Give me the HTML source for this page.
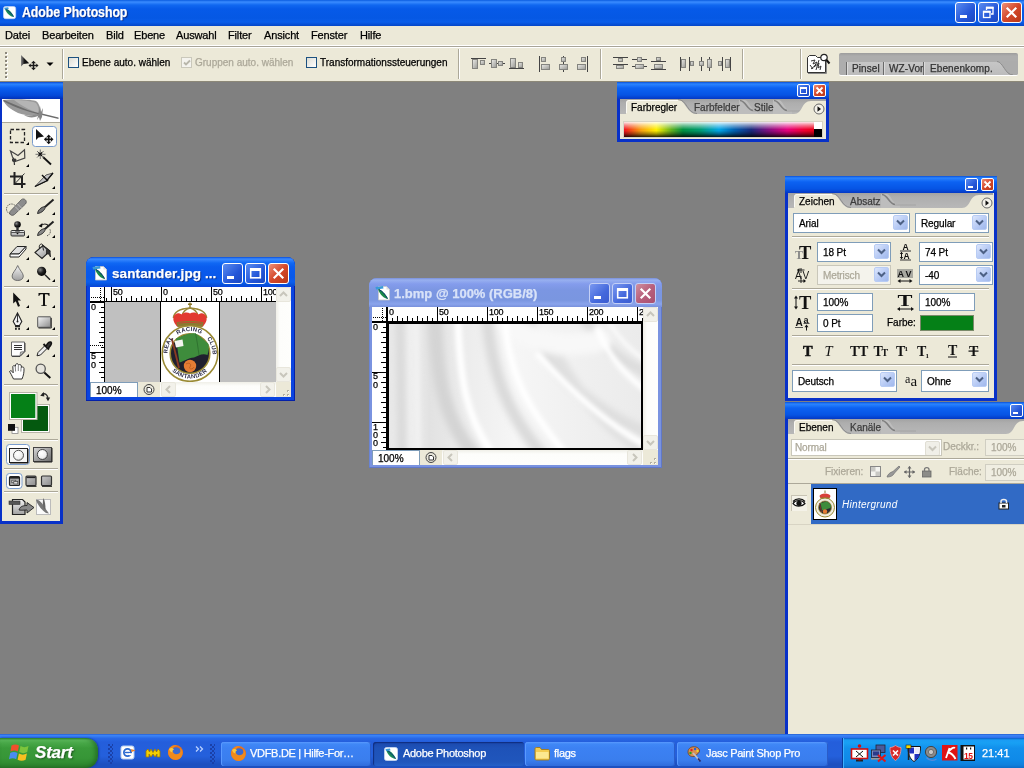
<!DOCTYPE html>
<html><head><meta charset="utf-8"><title>Adobe Photoshop</title>
<style>
*{box-sizing:border-box;margin:0;padding:0}
html,body{width:1024px;height:768px;overflow:hidden;background:#808080;font-family:"Liberation Sans",sans-serif;font-size:11px;color:#000;letter-spacing:-0.45px;-webkit-text-stroke:0.250px currentColor}
.abs{position:absolute}
#titlebar{position:absolute;left:0;top:0;width:1024px;height:26px;background:linear-gradient(#0a5ce0 0,#3a8cff 2px,#1068f0 5px,#065ae8 9px,#0558e4 18px,#0a5eea 22px,#0446c8 26px)}
#titlebar .t{position:absolute;left:22px;top:4px;color:#fff;font-weight:bold;font-size:14px;transform-origin:0 0;transform:scaleX(0.885);text-shadow:1px 1px 1px #0a2a80;letter-spacing:-0.1px;white-space:nowrap}
.wb svg{position:absolute;left:0;top:0}
.wb{position:absolute;width:21px;height:21px;border:1px solid #fff;border-radius:3px;background:linear-gradient(135deg,#5a8cf0,#2456d8 60%,#1c48c0)}
.wb.close{background:linear-gradient(135deg,#ee9078,#d4482a 50%,#b83818)}
#menubar{position:absolute;left:0;top:26px;width:1024px;height:20px;background:#ece9d8;border-bottom:1px solid #fff}
#menubar span{position:absolute;top:3px;font-size:11px;letter-spacing:-0.15px}
#optbar{position:absolute;left:0;top:46px;width:1024px;height:36px;background:#ece9d8;border-top:1px solid #a8a498;border-bottom:1px solid #8c8878;box-shadow:inset 0 1px 0 #fff}
#taskbar{position:absolute;left:0;top:734px;width:1024px;height:34px;background:linear-gradient(#3a80f0 0,#2a6cea 3px,#245edb 8px,#2460dc 22px,#1d50c0 30px)}

#optbar .sep{position:absolute;top:2px;width:2px;height:30px;border-left:1px solid #aca899;border-right:1px solid #fff}
.cb{position:absolute;width:11px;height:11px;border:1px solid #1c5180;background:linear-gradient(135deg,#dcdcd4,#fff)}
.cb.dis{border-color:#cac8bb;background:#f4f3ee}
.ol{position:absolute;top:10px;font-size:10px;white-space:nowrap;letter-spacing:0}
.well{position:absolute;left:839px;top:6px;width:179px;height:22px;background:linear-gradient(#9c9c9c,#adadad 3px,#adadad);border-radius:2px;overflow:hidden;box-shadow:0 1px 0 #fff}
.well span{position:absolute;top:10px;font-size:10px;color:#333;white-space:nowrap;letter-spacing:0.1px}
.well i{position:absolute;top:9px;width:2px;height:13px;border-left:1px solid #6a6a6a;border-right:1px solid #dadada}

.win{position:absolute;border-radius:8px 8px 0 0;background:#0a44e0;overflow:hidden;box-shadow:inset -1px -1px 0 #0420a8,inset 1px 0 0 #0a30c0}
.win .tb{position:absolute;left:0;top:0;right:0;height:29px;background:linear-gradient(#0a4ed8 0,#3a8aff 2px,#1068f4 6px,#0a5cee 10px,#0858ea 20px,#0a5eee 25px,#064cd4 29px)}
.win .tt{position:absolute;top:9px;color:#fff;font-weight:bold;font-size:13.500px;text-shadow:1px 1px 1px #0a2a80;white-space:nowrap}
.win.in{background:#7a93e0;box-shadow:inset -1px -1px 0 #6078c8,inset 1px 0 0 #6a84d4}
.win.in .tb{background:linear-gradient(#7a90d8 0,#98b0f0 2px,#849cec 6px,#7b96e2 12px,#7a96e0 22px,#8aa4ec 26px,#7890dc 29px)}
.win.in .tt{color:#d8e2f8;text-shadow:none}
.win.in .wb{background:linear-gradient(135deg,#7a98f0,#4468dc 60%,#3c5cd0);border-color:#c4d0f6}
.win.in .wb.close{background:linear-gradient(135deg,#d090a0,#b8607c 50%,#a85070)}
.cont{position:absolute;background:#fff;overflow:hidden}
.rl{position:absolute;font-size:9px;letter-spacing:-0.3px;line-height:8px;color:#000}
.sbv{position:absolute;width:15px;background:linear-gradient(90deg,#f0efe8,#fdfdfb 4px,#fefefc)}
.sbb{position:absolute;height:15px;background:linear-gradient(#f0efe8,#fdfdfb 4px,#fefefc)}
.sbtn{position:absolute;width:15px;height:15px;border:1px solid #e8e6dc;border-radius:2px;background:#f2f1ea}
.zb{position:absolute;background:#fff;font-size:10px;letter-spacing:0;padding:2px 0 0 5px;border:1px solid #7f9db9;border-bottom:0;color:#000}

.pal{position:absolute;background:#0831c8;overflow:hidden}
.pal .ptb{position:absolute;left:0;top:0;right:0;height:16px;background:linear-gradient(#0a50d8 0,#2a84ff 2px,#0c62f2 6px,#0654e4 13px,#0438c4 100%)}
.pb{position:absolute;width:13px;height:13px;border:1px solid #fff;border-radius:2px;background:linear-gradient(135deg,#5a8cf0,#2456d8 60%,#1c48c0)}
.pb.close{background:linear-gradient(135deg,#ee9078,#d4482a 50%,#b83818)}
.pb svg{position:absolute;left:0;top:0}
.pc{position:absolute;background:#ece9d8;overflow:hidden}
.tabs{position:absolute;left:0;top:0;right:0;height:16px;background:linear-gradient(#a2a2a2,#aeaeae 4px,#b8b8b8)}
.tab{position:absolute;top:0;height:16px;font-size:10px;padding-top:4px;white-space:nowrap;letter-spacing:0}
.combo{position:absolute;height:19px;background:#fff;border:1px solid #7f9db9;font-size:10px;letter-spacing:-0.1px;padding:4px 0 0 5px;white-space:nowrap;overflow:hidden}
.combo b{position:absolute;right:1px;top:1px;width:15px;height:15px;border-radius:2px;background:linear-gradient(135deg,#dce6fc,#b4c8f4 60%,#a0b8ec);border:1px solid #b8ccf4}
.combo b svg{position:absolute;left:2px;top:3px}
.combo.dis{border-color:#c9c7ba;color:#aca899;background:#f4f3ec}
.combo.dis2{background:#fff}
.inp{position:absolute;height:18px;background:#fff;border:1px solid #7f9db9;font-size:10px;letter-spacing:-0.1px;padding:3px 0 0 5px;white-space:nowrap}
.psep{position:absolute;height:2px;border-top:1px solid #aca899;border-bottom:1px solid #fff}

.grip{position:absolute;top:10px;width:5px;height:20px;background:radial-gradient(circle at 1px 1px,#1a40a8 0.900px,transparent 1.200px) 0 0/4px 4px,radial-gradient(circle at 1px 1px,#1a40a8 0.900px,transparent 1.200px) 2px 2px/4px 4px}
.tbtn{position:absolute;top:8px;height:24px;border-radius:3px;background:linear-gradient(#5a9aff 0,#4088f6 2px,#3c81f3 6px,#3a7eee 18px,#2f6cdc 24px);box-shadow:inset 1px 0 0 #5a9aff,inset -1px 0 0 #2a5cc8}
.tbtn.act{background:linear-gradient(#143c9a 0,#1c4cb0 2px,#1e52b8 6px,#2056bc 20px,#2460c8 24px);box-shadow:inset 1px 1px 1px #102e80}
.tbtn span{position:absolute;top:5px;color:#fff;font-size:11px;white-space:nowrap;letter-spacing:-0.3px}
.combo.dis2 b{background:#f0efe8;border-color:#e0ded4}
#root{position:absolute;left:0;top:0;width:1024px;height:768px;will-change:transform;overflow:hidden}
</style></head><body><div id="root">
<div id="titlebar"><svg class="abs" style="left:3px;top:6px" width="14" height="14" viewBox="0 0 16 16"><rect x="0.500" y="0.500" width="14" height="14" rx="2.500" fill="#fff" stroke="#c8d8f0" stroke-width="0.800"/><path d="M2 2.500 C6 3 10.500 7 12.500 12.500 C8 12 3.500 8 2 2.500 Z" fill="#1a8a58"/><path d="M2.500 3 C6 5 9.500 8 12 12" stroke="#0a3a80" stroke-width="1" fill="none"/><path d="M1.500 2 L6 1.500 L6.500 3.500 L2 4 Z" fill="#3a9ad8"/></svg><div class="t">Adobe Photoshop</div>
<div class="wb" style="left:955px;top:2px"><svg width="19" height="19"><rect x="4" y="12" width="7" height="3" fill="#fff"/></svg></div><div class="wb" style="left:978px;top:2px"><svg width="19" height="19"><path d="M7.500 7 L7.500 4.500 L14 4.500 L14 11 L12 11" fill="none" stroke="#fff" stroke-width="1.300"/><rect x="7" y="3.800" width="7.500" height="2" fill="#fff"/><rect x="4.500" y="8.500" width="6.500" height="6" fill="none" stroke="#fff" stroke-width="1.300"/><rect x="4" y="7.800" width="7.500" height="2" fill="#fff"/></svg></div><div class="wb close" style="left:1001px;top:2px"><svg width="19" height="19"><path d="M5.500 5.500 L13.500 13.500 M13.500 5.500 L5.500 13.500" stroke="#fff" stroke-width="2.200" stroke-linecap="square"/></svg></div>
</div>
<div id="menubar">
<span style="left:5px">Datei</span><span style="left:42px">Bearbeiten</span><span style="left:106px">Bild</span><span style="left:134px">Ebene</span><span style="left:176px">Auswahl</span><span style="left:228px">Filter</span><span style="left:264px">Ansicht</span><span style="left:311px">Fenster</span><span style="left:360px">Hilfe</span>
</div>
<div id="optbar">
<svg class="abs" style="left:5px;top:5px" width="4" height="28"><rect x="1" y="1" width="2" height="2" fill="#fff"/><rect x="0" y="0" width="2" height="2" fill="#8c887c"/><rect x="1" y="5" width="2" height="2" fill="#fff"/><rect x="0" y="4" width="2" height="2" fill="#8c887c"/><rect x="1" y="9" width="2" height="2" fill="#fff"/><rect x="0" y="8" width="2" height="2" fill="#8c887c"/><rect x="1" y="13" width="2" height="2" fill="#fff"/><rect x="0" y="12" width="2" height="2" fill="#8c887c"/><rect x="1" y="17" width="2" height="2" fill="#fff"/><rect x="0" y="16" width="2" height="2" fill="#8c887c"/><rect x="1" y="21" width="2" height="2" fill="#fff"/><rect x="0" y="20" width="2" height="2" fill="#8c887c"/><rect x="1" y="25" width="2" height="2" fill="#fff"/><rect x="0" y="24" width="2" height="2" fill="#8c887c"/></svg>
<svg class="abs" style="left:20px;top:7px" width="20" height="18" viewBox="0 0 20 18"><defs><linearGradient id="mvg" x1="0" y1="0" x2="1" y2="0"><stop offset="0" stop-color="#888"/><stop offset="0.45" stop-color="#111"/></linearGradient></defs><path d="M1 1 L1 12.500 L3.500 10 L9.200 9.300 Z" fill="url(#mvg)"/><path d="M13.500 6.800 L16 9.300 L14.200 9.300 L14.200 10.800 L16.300 10.800 L16.300 9.500 L18.500 11.500 L16.300 13.500 L16.300 12.200 L14.200 12.200 L14.200 13.700 L16 13.700 L13.500 16.200 L11 13.700 L12.800 13.700 L12.800 12.200 L10.700 12.200 L10.700 13.500 L8.500 11.500 L10.700 9.500 L10.700 10.800 L12.800 10.800 L12.800 9.300 L11 9.300 Z" fill="#1a1a1a"/></svg>
<svg class="abs" style="left:46px;top:15px" width="8" height="5"><path d="M0.5 0.500 L7.5 0.500 L4 4 Z" fill="#000"/></svg>
<div class="sep" style="left:62px"></div>
<div class="cb" style="left:68px;top:10px"></div><div class="ol" style="left:82px">Ebene auto. wählen</div>
<div class="cb dis" style="left:181px;top:10px"><svg width="10" height="10" style="position:absolute;left:0;top:0"><path d="M2 4.500 L4 6.500 L8 2.500" stroke="#b8b6aa" stroke-width="1.800" fill="none"/></svg></div><div class="ol" style="left:195px;color:#aca899">Gruppen auto. wählen</div>
<div class="cb" style="left:306px;top:10px"></div><div class="ol" style="left:320px">Transformationssteuerungen</div>
<div class="sep" style="left:458px"></div>
<svg class="abs" style="left:466px;top:7px" width="280" height="20"><defs><linearGradient id="ag" x1="0" y1="0" x2="1" y2="1"><stop offset="0" stop-color="#ecece8"/><stop offset="1" stop-color="#989894"/></linearGradient></defs><rect x="5" y="4" width="15" height="1" fill="#444"/><rect x="6.5" y="5.5" width="5.0" height="9.0" fill="url(#ag)" stroke="#84847f" stroke-width="1"/><rect x="14.5" y="6.5" width="4.0" height="4.0" fill="url(#ag)" stroke="#84847f" stroke-width="1"/><rect x="23" y="9" width="16" height="1" fill="#444"/><rect x="25.5" y="5.5" width="5.0" height="8.0" fill="url(#ag)" stroke="#84847f" stroke-width="1"/><rect x="32.5" y="7.5" width="4.0" height="4.0" fill="url(#ag)" stroke="#84847f" stroke-width="1"/><rect x="43" y="14" width="15" height="1" fill="#444"/><rect x="44.5" y="4.5" width="5.0" height="9.0" fill="url(#ag)" stroke="#84847f" stroke-width="1"/><rect x="52.5" y="8.5" width="4.0" height="5.0" fill="url(#ag)" stroke="#84847f" stroke-width="1"/><rect x="73" y="2" width="1" height="16" fill="#444"/><rect x="75.5" y="3.5" width="4.0" height="4.0" fill="url(#ag)" stroke="#84847f" stroke-width="1"/><rect x="75.5" y="10.5" width="8.0" height="5.0" fill="url(#ag)" stroke="#84847f" stroke-width="1"/><rect x="97" y="2" width="1" height="16" fill="#444"/><rect x="95.5" y="3.5" width="4.0" height="4.0" fill="url(#ag)" stroke="#84847f" stroke-width="1"/><rect x="93.5" y="10.5" width="8.0" height="5.0" fill="url(#ag)" stroke="#84847f" stroke-width="1"/><rect x="121" y="2" width="1" height="16" fill="#444"/><rect x="115.5" y="3.5" width="4.0" height="4.0" fill="url(#ag)" stroke="#84847f" stroke-width="1"/><rect x="111.5" y="10.5" width="8.0" height="5.0" fill="url(#ag)" stroke="#84847f" stroke-width="1"/><rect x="147" y="3" width="15" height="1" fill="#444"/><rect x="152.5" y="4.5" width="4.0" height="3.0" fill="url(#ag)" stroke="#84847f" stroke-width="1"/><rect x="147" y="10" width="15" height="1" fill="#444"/><rect x="150.5" y="11.5" width="7.0" height="3.0" fill="url(#ag)" stroke="#84847f" stroke-width="1"/><rect x="166" y="5" width="15" height="1" fill="#444"/><rect x="171.5" y="3.5" width="4.0" height="4.0" fill="url(#ag)" stroke="#84847f" stroke-width="1"/><rect x="166" y="12" width="15" height="1" fill="#444"/><rect x="169.5" y="10.5" width="8.0" height="4.0" fill="url(#ag)" stroke="#84847f" stroke-width="1"/><rect x="185" y="7" width="15" height="1" fill="#444"/><rect x="190.5" y="3.5" width="4.0" height="3.0" fill="url(#ag)" stroke="#84847f" stroke-width="1"/><rect x="185" y="15" width="15" height="1" fill="#444"/><rect x="188.5" y="10.5" width="8.0" height="4.0" fill="url(#ag)" stroke="#84847f" stroke-width="1"/><rect x="214" y="3" width="1" height="14" fill="#444"/><rect x="215.5" y="5.5" width="4.0" height="8.0" fill="url(#ag)" stroke="#84847f" stroke-width="1"/><rect x="223" y="3" width="1" height="14" fill="#444"/><rect x="224.5" y="7.5" width="3.0" height="4.0" fill="url(#ag)" stroke="#84847f" stroke-width="1"/><rect x="235" y="3" width="1" height="14" fill="#444"/><rect x="233.5" y="7.5" width="4.0" height="4.0" fill="url(#ag)" stroke="#84847f" stroke-width="1"/><rect x="243" y="3" width="1" height="14" fill="#444"/><rect x="241.5" y="5.5" width="4.0" height="8.0" fill="url(#ag)" stroke="#84847f" stroke-width="1"/><rect x="256" y="3" width="1" height="14" fill="#444"/><rect x="252.5" y="7.5" width="3.0" height="4.0" fill="url(#ag)" stroke="#84847f" stroke-width="1"/><rect x="264" y="3" width="1" height="14" fill="#444"/><rect x="259.5" y="5.5" width="4.0" height="8.0" fill="url(#ag)" stroke="#84847f" stroke-width="1"/></svg><div class="sep" style="left:600px"></div><div class="sep" style="left:742px"></div>
<div class="sep" style="left:800px"></div>
<svg class="abs" style="left:806px;top:6px" width="26" height="22" viewBox="0 0 26 22"><path d="M1.500 4.500 L3.500 2.500 L9.500 2.500 L11.500 4.500 L19.500 4.500 L19.500 19.500 L1.500 19.500 Z" fill="#fff" stroke="#333"/><path d="M2 20.500 L20.500 20.500 L20.500 6" stroke="#888" fill="none"/><path d="M5 8 L9 7 L7 11 L11 9 L8 14 L13 10 L12 15 L15 13 L14 17 M4 12 L7 16 M5 16 L10 12 M10 17 L13 7" stroke="#333" stroke-width="1" fill="none"/><circle cx="18" cy="4.500" r="3.200" fill="#fff" stroke="#222" stroke-width="1.200"/><path d="M20.500 7 L23.500 10.500" stroke="#111" stroke-width="2"/></svg>
<div class="well"><div class="abs" style="left:7px;top:9px;width:166px;height:13px;background:linear-gradient(#c6c6c6,#bcbcbc);"></div>
<svg class="abs" style="left:150px;top:8px" width="29" height="14"><path d="M0 0 L8 0 C14 0 16 14 24 14 L29 14 L29 0 Z" fill="#acacac"/><path d="M8 0.500 C14 0.500 16 14 24 14" stroke="#8a8a8a" fill="none"/></svg>
<i style="left:7px"></i><span style="left:13px">Pinsel</span><i style="left:44px"></i><span style="left:50px">WZ-Vor</span><i style="left:84px"></i><span style="left:91px">Ebenenkomp.</span></div>
</div>
<svg class="abs" style="left:0;top:82px" width="64" height="443" viewBox="0 82 64 443">
<defs>
<linearGradient id="tbt" x1="0" y1="0" x2="0" y2="1"><stop offset="0" stop-color="#0a48d0"/><stop offset="0.12" stop-color="#2a84ff"/><stop offset="0.35" stop-color="#0a5ff0"/><stop offset="0.8" stop-color="#0348d8"/><stop offset="1" stop-color="#0230b8"/></linearGradient>
<linearGradient id="gm" x1="0" y1="0" x2="1" y2="1"><stop offset="0" stop-color="#f8f8f8"/><stop offset="1" stop-color="#8a8a8a"/></linearGradient>
<linearGradient id="gm2" x1="0" y1="0" x2="0" y2="1"><stop offset="0" stop-color="#f4f4f4"/><stop offset="1" stop-color="#a0a0a0"/></linearGradient>
<linearGradient id="gq" x1="0" y1="0" x2="1" y2="1"><stop offset="0" stop-color="#d8d8d8"/><stop offset="1" stop-color="#6a6a6a"/></linearGradient><linearGradient id="gq2" x1="0" y1="0" x2="1" y2="1"><stop offset="0" stop-color="#c8c8c8"/><stop offset="1" stop-color="#8c8c8c"/></linearGradient><radialGradient id="ball" cx="0.35" cy="0.35" r="0.7"><stop offset="0" stop-color="#888"/><stop offset="0.5" stop-color="#222"/><stop offset="1" stop-color="#000"/></radialGradient>
<radialGradient id="wball" cx="0.4" cy="0.35" r="0.7"><stop offset="0" stop-color="#fff"/><stop offset="0.7" stop-color="#eee"/><stop offset="1" stop-color="#bbb"/></radialGradient>
</defs>
<rect x="0" y="82" width="63" height="442" fill="#0831c8"/>
<rect x="0" y="82" width="63" height="17" fill="url(#tbt)"/>
<rect x="2" y="99" width="58" height="422" fill="#ece9d8"/>
<rect x="2" y="99" width="58" height="23" fill="#fff"/>
<!-- feather -->
<path d="M3 100 C10 99 28 99 36 101 C40 104 41 110 40 114 C34 116 26 116 18 113 C10 109 5 105 3 100 Z" fill="#9a9a9a"/>
<path d="M14 100 C22 100 32 101 36 103 C39 107 39 111 38 113 C30 110 20 105 14 100 Z" fill="#b4b4b4"/>
<path d="M24 115 C28 118 34 118 38 116 L40 113 C36 115 30 116 24 115 Z" fill="#8c8c8c"/>
<path d="M3 101 C16 108 28 112 42 115 L58.500 119 L58.500 117.500 L42 113.500 C30 112 16 105 4 100 Z" fill="#6c6c6c"/>
<path d="M38 116 L40 106 L41 112 L43 108 L42 117 L40 121 L39 117 L37 120 Z" fill="#858585"/>
<rect x="2" y="122" width="58" height="1" fill="#aca899"/>
<!-- separators -->
<g fill="#aca899"><rect x="4" y="193" width="54" height="1"/><rect x="4" y="286" width="54" height="1"/><rect x="4" y="335" width="54" height="1"/><rect x="4" y="384" width="54" height="1"/><rect x="4" y="439" width="54" height="1"/><rect x="4" y="468" width="54" height="1"/><rect x="4" y="491" width="54" height="1"/></g>
<g fill="#fff"><rect x="4" y="194" width="54" height="1"/><rect x="4" y="287" width="54" height="1"/><rect x="4" y="336" width="54" height="1"/><rect x="4" y="385" width="54" height="1"/><rect x="4" y="440" width="54" height="1"/><rect x="4" y="469" width="54" height="1"/><rect x="4" y="492" width="54" height="1"/></g>
<!-- flyout triangles -->
<g fill="#000">
<path d="M29 142 L29 145 L26 145 Z"/><path d="M29 164 L29 167 L26 167 Z"/><path d="M55 186 L55 189 L52 189 Z"/>
<path d="M29 212 L29 215 L26 215 Z"/><path d="M55 212 L55 215 L52 215 Z"/>
<path d="M29 235 L29 238 L26 238 Z"/><path d="M55 235 L55 238 L52 238 Z"/>
<path d="M29 257 L29 260 L26 260 Z"/><path d="M55 257 L55 260 L52 260 Z"/>
<path d="M29 279 L29 282 L26 282 Z"/><path d="M55 279 L55 282 L52 282 Z"/>
<path d="M29 305 L29 308 L26 308 Z"/><path d="M55 305 L55 308 L52 308 Z"/>
<path d="M29 327 L29 330 L26 330 Z"/><path d="M55 327 L55 330 L52 330 Z"/>
<path d="M29 354 L29 357 L26 357 Z"/><path d="M55 354 L55 357 L52 357 Z"/>
</g>
<!-- marquee -->
<rect x="10.500" y="129.500" width="14" height="13" fill="none" stroke="#222" stroke-width="1.300" stroke-dasharray="3.500 2"/>
<!-- move selected btn -->
<rect x="32.500" y="126.500" width="24" height="20" rx="3" fill="#fff" stroke="#7a9ccc"/>
<path d="M36 129 L36 140 L38.500 137.500 L44 136.500 Z" fill="#111"/>
<path d="M48.700 134.500 L51.200 137.200 L49.500 137.200 L49.500 138.500 L51 138.500 L51 137 L53.500 139.300 L51 141.800 L51 140.200 L49.500 140.200 L49.500 141.700 L51.200 141.700 L48.700 144.200 L46.200 141.700 L47.900 141.700 L47.900 140.200 L46.400 140.200 L46.400 141.800 L43.900 139.300 L46.400 137 L46.400 138.500 L47.900 138.500 L47.900 137.200 L46.200 137.200 Z" fill="#111"/>
<!-- lasso -->
<path d="M10.500 151 L18 155.500 L24.500 149.800 L24.800 158 L15 161.500 L12.500 157 Z" fill="none" stroke="#444" stroke-width="1.200"/>
<path d="M14 158 C11 160 13 162 15 161 C17 160 15 158 14 160 L14.500 165" fill="none" stroke="#333" stroke-width="1.200"/>
<!-- wand -->
<path d="M43 157 L51 164.500" stroke="#111" stroke-width="1.800"/>
<path d="M40.300 149.500 L40.300 159 M35.500 154.300 L45.500 154.300 M37 151 L43.600 157.600 M43.600 151 L37 157.600" stroke="#666" stroke-width="0.900"/>
<path d="M38.500 152.500 L42 156 M42 152.500 L38.500 156" stroke="#111" stroke-width="1.200"/>
<!-- crop -->
<path d="M14.500 172 L14.500 184 L25.500 184 M10 176.500 L22 176.500 L22 188" fill="none" stroke="#222" stroke-width="2"/>
<path d="M15.500 183 L24.500 173.500" stroke="#333" stroke-width="1"/>
<!-- slice knife -->
<path d="M35 186.500 L46 175 L53 173 L46.500 181 Z" fill="url(#gm)" stroke="#333" stroke-width="0.800"/>
<path d="M35 186.500 L46.500 181 L53 173" fill="none" stroke="#111" stroke-width="1.300"/>
<path d="M42 175 L48 181" stroke="#111" stroke-width="1.500"/>
<!-- healing bandaid -->
<circle cx="11.500" cy="209" r="5" fill="none" stroke="#222" stroke-width="1" stroke-dasharray="1 1.300"/>
<path d="M10.500 211 L21.500 199.500 C24 197.500 28 201 25.500 204 L14.500 214.500 C11.500 217 8 213.500 10.500 211 Z" fill="#8c8c8c" stroke="#555" stroke-width="0.800"/>
<path d="M15 206.500 L19.500 211 M17.500 204 L22 208.500" stroke="#ccc" stroke-width="0.800"/>
<!-- brush -->
<path d="M45 207 L53.500 199.500" stroke="#222" stroke-width="2"/>
<path d="M37.500 213.500 C38 210 41 207 45 206.500 C46 209 42 213 37.500 213.500 Z" fill="#777" stroke="#222" stroke-width="0.900"/>
<!-- stamp -->
<circle cx="17.500" cy="224.500" r="3.300" fill="url(#ball)"/>
<rect x="16.300" y="227" width="2.400" height="4" fill="#333"/>
<rect x="11" y="230.500" width="13.500" height="5.500" rx="1" fill="url(#gm2)" stroke="#333" stroke-width="1"/>
<path d="M15 231.500 L20 231.500 L17.500 234.500 Z" fill="#111"/>
<rect x="11" y="232" width="13.500" height="1" fill="#555"/>
<!-- history brush -->
<path d="M45 229 L53.500 221.500" stroke="#222" stroke-width="2"/>
<path d="M37.500 235.500 C38 232 41 229 45 228.500 C46 231 42 235 37.500 235.500 Z" fill="#888" stroke="#222" stroke-width="0.900"/>
<path d="M40 226.500 C43 223 47 223.500 48.500 226" fill="none" stroke="#222" stroke-width="1.200"/>
<path d="M38.500 226 L42.500 223 L42 227.500 Z" fill="#111"/>
<path d="M50 229.500 C51 232 50 235 46.500 236" fill="none" stroke="#222" stroke-width="1" stroke-dasharray="1 1.200"/>
<!-- eraser -->
<path d="M10 254 L17 246.500 L26 246.500 L19 254 Z" fill="#e0e0e0" stroke="#222" stroke-width="1"/>
<path d="M10 254 L19 254 L26 246.500 L26 249 L19 257 L10 257 Z" fill="#fafafa" stroke="#222" stroke-width="1"/>
<!-- bucket -->
<path d="M35 252.500 L43 245.500 L50 251 L42 258.500 Z" fill="url(#gm)" stroke="#222" stroke-width="1.100"/>
<path d="M43 245.500 L50 251 L50.500 257 C49 254 48 253 46.500 254.500 L46.500 250" fill="#333" stroke="#222" stroke-width="0.800"/>
<path d="M39.500 248.500 C38.500 245 41 243 42.500 244.500 L43.500 250.500" fill="none" stroke="#222" stroke-width="1"/>
<!-- blur drop -->
<path d="M17.700 265.500 C19.500 270 23.300 273 23.300 276 C23.300 279 21 280.500 17.700 280.500 C14.400 280.500 12.100 279 12.100 276 C12.100 273 16 270 17.700 265.500 Z" fill="url(#gm2)" stroke="#666" stroke-width="0.900"/>
<!-- dodge -->
<circle cx="41.600" cy="271.300" r="4.600" fill="url(#ball)"/>
<path d="M45 274.700 L50 279.800" stroke="#222" stroke-width="1.400"/>
<!-- path select arrow -->
<path d="M13.200 292.500 L13.200 303.500 L15.800 301.200 L18 306.800 L20 306 L17.800 300.500 L21 300.500 Z" fill="#111"/>
<!-- T -->
<path d="M38.500 293 L49.500 293 L49.500 296 L48.700 296 C48.500 294.500 48 294.200 45 294.200 L45 304.200 C45 305.200 45.500 305.400 47 305.500 L47 306 L41 306 L41 305.500 C42.500 305.400 43 305.200 43 304.200 L43 294.200 C40 294.200 39.500 294.500 39.300 296 L38.500 296 Z" fill="#111"/>
<!-- pen -->
<path d="M17.500 313 L21.800 321.500 L19.500 325.500 L15.500 325.500 L13.200 321.500 Z" fill="#f4f4f4" stroke="#222" stroke-width="1.100"/>
<path d="M17.500 314 L17.500 321" stroke="#222" stroke-width="0.900"/><circle cx="17.500" cy="321.500" r="1" fill="#222"/>
<rect x="15" y="326" width="5" height="1.200" fill="#222"/><rect x="15" y="327.800" width="1.800" height="2" fill="#222"/><rect x="18.200" y="327.800" width="1.800" height="2" fill="#222"/>
<!-- shape -->
<rect x="37.700" y="316.800" width="13" height="10.500" rx="0.500" fill="url(#gm)" stroke="#555" stroke-width="1"/>
<path d="M38.500 328 L51.300 328 L51.300 318" fill="none" stroke="#333" stroke-width="1"/>
<!-- notes -->
<path d="M11.500 342 L24.500 342 L24.500 351.500 L20 356 L11.500 356 Z" fill="#fdfdfd" stroke="#666" stroke-width="1"/>
<path d="M12 356.500 L20 356.500 L25 351.500 L25 343" fill="none" stroke="#444" stroke-width="1"/>
<path d="M20 356 L20.500 352 L24.500 351.500 Z" fill="#bbb" stroke="#555" stroke-width="0.600"/>
<path d="M14 345.500 L22 345.500 M14 347.500 L22 347.500 M14 349.500 L22 349.500" stroke="#333" stroke-width="1"/>
<!-- eyedropper -->
<path d="M37 355.800 L38 352.500 L45 345.500 L47.500 348 L40.500 355 Z" fill="#eee" stroke="#222" stroke-width="1"/>
<path d="M43.500 344 L49 349.500" stroke="#111" stroke-width="2"/>
<path d="M46 346.500 C47 344 49 341.500 51 342 C52.500 343 50.500 346 48.500 348" fill="#333" stroke="#111" stroke-width="1.500"/>
<!-- hand -->
<path d="M13.500 379 C12 376 10.500 373 9.500 371.500 C10.500 370 12 371 13.200 372.800 L12.800 366.500 C13.500 365 15 365.500 15.200 366.500 L15.800 364.500 C16.500 363 18.200 363.500 18.300 364.800 L18.800 365.200 C19.500 364 21.200 364.500 21.300 366 L21.500 367.500 C22.500 366.500 24 367 24 368.500 C24.200 372 23.500 375.500 22 379 Z" fill="#fff" stroke="#333" stroke-width="1"/>
<path d="M15.300 367 L15.600 371.500 M18.300 365.500 L18.300 371 M21.200 367 L20.800 371.500" stroke="#666" stroke-width="0.800"/>
<!-- zoom -->
<circle cx="40.700" cy="368.800" r="4.600" fill="#e6e4dc" stroke="#555" stroke-width="1.300"/>
<path d="M44.300 372.400 L50.300 378" stroke="#111" stroke-width="2"/>
<!-- color swatches -->
<rect x="21.500" y="404.500" width="28" height="28" fill="#fff" stroke="#b8b4a8" stroke-width="1"/>
<rect x="23" y="406" width="25" height="25" fill="#04590f"/>
<rect x="9.500" y="392.500" width="27.500" height="27" fill="#fff" stroke="#b8b4a8" stroke-width="1"/>
<rect x="11" y="394" width="24.300" height="24" fill="#058017"/>
<!-- swap -->
<path d="M42 394.500 C45 392.500 48 395 48 399" fill="none" stroke="#333" stroke-width="1.300"/>
<path d="M40.200 395.800 L43.800 392 L44.300 396.500 Z" fill="#222"/><path d="M45.800 397.500 L50.200 397.500 L48 401.200 Z" fill="#222"/>
<!-- default -->
<rect x="12" y="427.300" width="6" height="6.300" fill="#fff" stroke="#888" stroke-width="0.800"/>
<rect x="8" y="424" width="7" height="6.800" fill="#111"/>
<!-- quick mask -->
<rect x="6.500" y="444.500" width="23" height="20" rx="3" fill="#fff" stroke="#7a9ccc"/>
<rect x="9.500" y="448.500" width="18" height="14" fill="#f6f6f6" stroke="#222" stroke-width="1"/>
<path d="M10 463 L28 463 L28 449" fill="none" stroke="#111" stroke-width="1"/>
<circle cx="18.500" cy="455.300" r="5" fill="url(#wball)" stroke="#555" stroke-width="1"/>
<rect x="33.500" y="447.500" width="18" height="14" fill="url(#gq)" stroke="#444" stroke-width="1"/>
<path d="M34 462 L52 462 L52 448" fill="none" stroke="#222" stroke-width="1"/>
<circle cx="42.400" cy="454.500" r="5" fill="url(#wball)" stroke="#444" stroke-width="1"/>
<!-- screen modes -->
<rect x="6.500" y="473.500" width="15.500" height="15" rx="3" fill="#fff" stroke="#7a9ccc"/>
<rect x="9.500" y="476.500" width="10" height="9" rx="1" fill="#aaa" stroke="#222" stroke-width="1.200"/>
<rect x="10" y="477" width="9" height="1.600" fill="#222"/>
<rect x="11.800" y="480.200" width="4" height="2.500" fill="#ddd" stroke="#444" stroke-width="0.700"/><rect x="13.800" y="481.500" width="4" height="2.500" fill="#ddd" stroke="#444" stroke-width="0.700"/>
<rect x="26" y="476" width="10" height="9.500" rx="1" fill="url(#gq2)" stroke="#333" stroke-width="1.200"/>
<rect x="26.500" y="476.500" width="9" height="1.600" fill="#222"/>
<rect x="41.500" y="476" width="10" height="9.500" rx="1" fill="url(#gq2)" stroke="#333" stroke-width="1.200"/>
<path d="M26.500 486.300 L36.500 486.300 M42 486.300 L52 486.300" stroke="#111" stroke-width="1"/>
<!-- imageready -->
<path d="M12.500 499.500 L22.500 499.500 L25 502 L25 514.500 L12.500 514.500 Z" fill="url(#gm2)" stroke="#222" stroke-width="1.200"/>
<rect x="9" y="501" width="11" height="3.500" fill="#555" stroke="#333" stroke-width="0.600"/>
<path d="M19 510 C20 506 24 505.500 27 505.500 L27 502.500 L34 507.500 L27 513 L27 510 C24 510 22 510.500 19 510 Z" fill="#888" stroke="#222" stroke-width="0.900"/>
<rect x="36.500" y="499.500" width="14" height="15" fill="#fafafa" stroke="#bbb" stroke-width="1"/>
<path d="M36 500 C38 499 42 502 45 508 L49 513.500 L46 513 C42 510 38 506 36 500 Z" fill="#777"/>
<path d="M43.500 498 C45 501 45.500 505 45.500 509 L44 509 C42.500 505 42.500 501 43.500 498 Z" fill="#666"/>

<!--TOOLS_END-->
</svg>

<div class="win" style="left:86px;top:257px;width:209px;height:144px"><div class="tb"></div><svg class="abs" style="left:6px;top:8px" width="17" height="16" viewBox="0 0 17 16"><path d="M3.500 1.500 L11.500 1.500 L14.500 4.500 L14.500 15 L3.500 15 Z" fill="#fff" stroke="#c8c8c8" stroke-width="0.800"/><path d="M11.500 1.500 L11.500 4.500 L14.500 4.500 Z" fill="#ddd"/><path d="M0.500 2 L8 1 L8.500 3.500 L1 4.500 Z" fill="#3a9ad8"/><path d="M3 4 C6 4.500 10 8 13 14 C9 13.500 5 10 3 4 Z" fill="#1a8a48"/><path d="M4 4.500 C7 6 10 9 12.500 13.500" stroke="#0a3a70" stroke-width="1" fill="none"/></svg><div class="tt" style="left:26px;letter-spacing:0.1px">santander.jpg ...</div><div class="wb" style="left:136px;top:6px"><svg width="19" height="19"><rect x="4" y="12" width="7" height="3" fill="#fff"/></svg></div><div class="wb" style="left:159px;top:6px"><svg width="19" height="19"><rect x="4.700" y="5" width="9.600" height="8.800" fill="none" stroke="#fff" stroke-width="1.600"/><rect x="4" y="4" width="11" height="3" fill="#fff"/></svg></div><div class="wb close" style="left:182px;top:6px"><svg width="19" height="19"><path d="M5.500 5.500 L13.500 13.500 M13.500 5.500 L5.500 13.500" stroke="#fff" stroke-width="2.200" stroke-linecap="square"/></svg></div><div class="cont" style="left:4px;top:30px;width:201px;height:110px"><div class="abs" style="left:15px;top:15px;width:171px;height:80px;background:#c0c0c0"></div><div class="abs" style="left:70px;top:15px;width:60px;height:80px;background:#fff;border-left:1px solid #000;border-right:1px solid #000"></div><svg class="abs" style="left:71px;top:15px" width="59" height="80" viewBox="161 302 59 80">
<defs><path id="ctop" d="M 167.500 353.500 A 22.500 22.500 0 0 1 212.500 353.500"/><path id="cbot" d="M 165 353.500 A 25 25 0 0 0 215 353.500"/></defs>
<path d="M190 302.500 L190 308 M188 304.300 L192 304.300" stroke="#8c7a2c" stroke-width="1.400"/>
<path d="M173.500 318 C174 311 182 308.500 190 308 C198 308.500 206 311 206.500 318" fill="none" stroke="#9a8838" stroke-width="1.600"/>
<path d="M182 316 C183 311 186 309 190 308 C194 309 197 311 198 316" fill="none" stroke="#9a8838" stroke-width="1.300"/>
<path d="M174 316 C176 312 180 313 181.500 314.500 C184 312 188 312 190 313.500 C192 312 196 312 198.500 314.500 C200 313 204 312 206 316 C208 320 205 324 203 326.500 L177 326.500 C175 324 172 320 174 316 Z" fill="#e23a30"/>
<path d="M176.500 322.500 C182 320.500 198 320.500 203.500 322.500 L202.500 327 C196 325.500 184 325.500 177.500 327 Z" fill="#8a7a30"/>
<path d="M178 323.500 C184 322 196 322 202 323.500" fill="none" stroke="#c44a30" stroke-width="1"/>
<circle cx="190" cy="353.500" r="27.800" fill="#fff" stroke="#9a8a34" stroke-width="1.600"/>
<circle cx="190" cy="353.500" r="19.800" fill="#20202e" stroke="#9a8a34" stroke-width="1.600"/>
<path d="M176 338.500 C183 336 189 332.500 195.500 333.500 C200 336 204 340 208.500 344 C209 348 208.500 352 207.500 355 C202 353 198 356 194 357.500 C188 358 184 361 179.500 362.500 Z" fill="#3e8c3c"/>
<path d="M195.500 333.500 C197 340 198 348 199 355" stroke="#2f7230" stroke-width="1" fill="none"/>
<path d="M174.500 341 L182.500 339.500 L183.500 346 L176 347.500 Z" fill="#f4f4f0"/>
<path d="M171.800 338.500 L179 368" stroke="#8c3a22" stroke-width="1.800"/>
<circle cx="190" cy="366" r="6.200" fill="#e47c34"/>
<path d="M186 364 C189 362 192 364 190 367 C188 369 193 370 194 367" fill="none" stroke="#b85a20" stroke-width="0.800"/>
<text font-family="Liberation Sans" font-size="5.900" font-weight="bold" fill="#2c2c48" letter-spacing="0.200"><textPath href="#ctop" startOffset="0">REAL</textPath></text>
<text font-family="Liberation Sans" font-size="5.900" font-weight="bold" fill="#2c2c48" letter-spacing="0.300"><textPath href="#ctop" startOffset="22">RACING</textPath></text>
<text font-family="Liberation Sans" font-size="5.900" font-weight="bold" fill="#2c2c48" letter-spacing="0.300"><textPath href="#ctop" startOffset="54">CLUB</textPath></text>
<text font-family="Liberation Sans" font-size="5.900" font-weight="bold" fill="#2c2c48" letter-spacing="0.300"><textPath href="#cbot" startOffset="19">SANTANDER</textPath></text>
</svg><svg class="abs" style="left:15px;top:0px" width="171" height="15" viewBox="105 287 171 15"><rect x="105" y="287" width="171" height="15" fill="#fff"/><rect x="106" y="298" width="1" height="3" fill="#000"/><rect x="111" y="286" width="1" height="15" fill="#000"/><rect x="116" y="298" width="1" height="3" fill="#000"/><rect x="121" y="296" width="1" height="5" fill="#000"/><rect x="126" y="298" width="1" height="3" fill="#000"/><rect x="131" y="296" width="1" height="5" fill="#000"/><rect x="136" y="298" width="1" height="3" fill="#000"/><rect x="141" y="296" width="1" height="5" fill="#000"/><rect x="146" y="298" width="1" height="3" fill="#000"/><rect x="151" y="296" width="1" height="5" fill="#000"/><rect x="156" y="298" width="1" height="3" fill="#000"/><rect x="161" y="286" width="1" height="15" fill="#000"/><rect x="166" y="298" width="1" height="3" fill="#000"/><rect x="171" y="296" width="1" height="5" fill="#000"/><rect x="176" y="298" width="1" height="3" fill="#000"/><rect x="181" y="296" width="1" height="5" fill="#000"/><rect x="186" y="298" width="1" height="3" fill="#000"/><rect x="191" y="296" width="1" height="5" fill="#000"/><rect x="196" y="298" width="1" height="3" fill="#000"/><rect x="201" y="296" width="1" height="5" fill="#000"/><rect x="206" y="298" width="1" height="3" fill="#000"/><rect x="211" y="286" width="1" height="15" fill="#000"/><rect x="216" y="298" width="1" height="3" fill="#000"/><rect x="221" y="296" width="1" height="5" fill="#000"/><rect x="226" y="298" width="1" height="3" fill="#000"/><rect x="231" y="296" width="1" height="5" fill="#000"/><rect x="236" y="298" width="1" height="3" fill="#000"/><rect x="241" y="296" width="1" height="5" fill="#000"/><rect x="246" y="298" width="1" height="3" fill="#000"/><rect x="251" y="296" width="1" height="5" fill="#000"/><rect x="256" y="298" width="1" height="3" fill="#000"/><rect x="261" y="286" width="1" height="15" fill="#000"/><rect x="266" y="298" width="1" height="3" fill="#000"/><rect x="271" y="296" width="1" height="5" fill="#000"/><rect x="105" y="301" width="171" height="1" fill="#000"/><text x="113" y="295" font-size="9" font-family="Liberation Sans" letter-spacing="-0.300" stroke="#000" stroke-width="0.250">50</text><text x="163" y="295" font-size="9" font-family="Liberation Sans" letter-spacing="-0.300" stroke="#000" stroke-width="0.250">0</text><text x="213" y="295" font-size="9" font-family="Liberation Sans" letter-spacing="-0.300" stroke="#000" stroke-width="0.250">50</text><text x="263" y="295" font-size="9" font-family="Liberation Sans" letter-spacing="-0.300" stroke="#000" stroke-width="0.250">100</text></svg><svg class="abs" style="left:0px;top:15px" width="15" height="80" viewBox="90 302 15 80"><rect x="90" y="302" width="15" height="80" fill="#fff"/><rect x="89" y="302" width="15" height="1" fill="#000"/><rect x="101" y="307" width="3" height="1" fill="#000"/><rect x="99" y="312" width="5" height="1" fill="#000"/><rect x="101" y="317" width="3" height="1" fill="#000"/><rect x="99" y="322" width="5" height="1" fill="#000"/><rect x="101" y="327" width="3" height="1" fill="#000"/><rect x="99" y="332" width="5" height="1" fill="#000"/><rect x="101" y="337" width="3" height="1" fill="#000"/><rect x="99" y="342" width="5" height="1" fill="#000"/><rect x="101" y="347" width="3" height="1" fill="#000"/><rect x="89" y="352" width="15" height="1" fill="#000"/><rect x="101" y="357" width="3" height="1" fill="#000"/><rect x="99" y="362" width="5" height="1" fill="#000"/><rect x="101" y="367" width="3" height="1" fill="#000"/><rect x="99" y="372" width="5" height="1" fill="#000"/><rect x="101" y="377" width="3" height="1" fill="#000"/><rect x="104" y="302" width="1" height="80" fill="#000"/><text x="91" y="310" font-size="9" font-family="Liberation Sans" stroke="#000" stroke-width="0.250">0</text><text x="91" y="359" font-size="9" font-family="Liberation Sans" stroke="#000" stroke-width="0.250">5</text><text x="91" y="368" font-size="9" font-family="Liberation Sans" stroke="#000" stroke-width="0.250">0</text></svg><svg class="abs" style="left:0;top:0" width="15" height="15"><rect width="15" height="15" fill="#fff"/><path d="M10.500 1 L10.500 15 M1 10.500 L15 10.500" stroke="#000" stroke-width="1" stroke-dasharray="1 1"/><rect x="14" y="0" width="1" height="15" fill="#000"/><rect x="0" y="14" width="15" height="1" fill="#000"/></svg><div class="abs" style="left:0;top:58px;width:14px;height:1px;background:repeating-linear-gradient(90deg,#000 0,#000 1px,transparent 1px,transparent 2px)"></div><div class="sbv" style="left:186px;top:0;height:95px"></div><div class="sbtn" style="left:186px;top:0"><svg width="13" height="13"><path d="M3 8 L6.500 4.500 L10 8" stroke="#c8c6bc" stroke-width="2" fill="none"/></svg></div><div class="sbtn" style="left:186px;top:80px"><svg width="13" height="13"><path d="M3 5 L6.500 8.500 L10 5" stroke="#c8c6bc" stroke-width="2" fill="none"/></svg></div><div class="sbb" style="left:0;top:95px;width:201px"></div><div class="zb" style="left:0;top:95px;width:48px;height:15px">100%</div><div class="abs" style="left:48px;top:95px;width:22px;height:15px;background:#ece9d8"><svg width="22" height="15"><circle cx="11" cy="7.500" r="5" fill="#e8e6da" stroke="#444" stroke-width="1"/><path d="M9 5.500 L12 5.500 L13.500 7 L13.500 10 L9 10 Z" fill="#fff" stroke="#222" stroke-width="0.900"/></svg></div><div class="sbtn" style="left:71px;top:95px"><svg width="13" height="13"><path d="M8 3 L4.500 6.500 L8 10" stroke="#c8c6bc" stroke-width="2" fill="none"/></svg></div><div class="sbtn" style="left:170px;top:95px"><svg width="13" height="13"><path d="M5 3 L8.500 6.500 L5 10" stroke="#c8c6bc" stroke-width="2" fill="none"/></svg></div><div class="abs" style="left:186px;top:95px;width:15px;height:15px;background:#ece9d8"><svg width="15" height="15"><g fill="#b4b0a0"><rect x="11" y="12" width="2" height="2"/><rect x="7" y="12" width="2" height="2"/><rect x="11" y="8" width="2" height="2"/></g><g fill="#fff"><rect x="12" y="13" width="1" height="1"/><rect x="8" y="13" width="1" height="1"/><rect x="12" y="9" width="1" height="1"/></g></svg></div></div></div>
<div class="win in" style="left:369px;top:278px;width:293px;height:190px"><div class="tb"></div><svg class="abs" style="left:6px;top:7px" width="17" height="16" viewBox="0 0 17 16"><path d="M3.500 1.500 L11.500 1.500 L14.500 4.500 L14.500 15 L3.500 15 Z" fill="#fff" stroke="#c8c8c8" stroke-width="0.800"/><path d="M11.500 1.500 L11.500 4.500 L14.500 4.500 Z" fill="#ddd"/><path d="M0.500 2 L8 1 L8.500 3.500 L1 4.500 Z" fill="#3a9ad8"/><path d="M3 4 C6 4.500 10 8 13 14 C9 13.500 5 10 3 4 Z" fill="#1a8a48"/><path d="M4 4.500 C7 6 10 9 12.500 13.500" stroke="#0a3a70" stroke-width="1" fill="none"/></svg><div class="tt" style="left:25px;top:8px;font-size:13px;letter-spacing:0px">1.bmp @ 100% (RGB/8)</div><div class="wb" style="left:220px;top:5px"><svg width="19" height="19"><rect x="4" y="12" width="7" height="3" fill="#fff"/></svg></div><div class="wb" style="left:243px;top:5px"><svg width="19" height="19"><rect x="4.700" y="5" width="9.600" height="8.800" fill="none" stroke="#fff" stroke-width="1.600"/><rect x="4" y="4" width="11" height="3" fill="#fff"/></svg></div><div class="wb close" style="left:266px;top:5px"><svg width="19" height="19"><path d="M5.500 5.500 L13.500 13.500 M13.500 5.500 L5.500 13.500" stroke="#fff" stroke-width="2.200" stroke-linecap="square"/></svg></div><div class="cont" style="left:3px;top:29px;width:286px;height:158px"><div class="abs" style="left:15px;top:15px;width:256px;height:128px;background:#000"></div><svg class="abs" style="left:17px;top:17px" width="252" height="124" viewBox="389 324 252 124">
<defs><filter id="bl" x="-10%" y="-10%" width="120%" height="120%"><feGaussianBlur stdDeviation="3"/></filter><filter id="bl2" x="-10%" y="-10%" width="120%" height="120%"><feGaussianBlur stdDeviation="2.200"/></filter>
<linearGradient id="sb" x1="0" y1="0" x2="1" y2="0"><stop offset="0" stop-color="#e8e8e8"/><stop offset="0.08" stop-color="#f0f0f0"/><stop offset="0.16" stop-color="#e2e2e2"/><stop offset="0.3" stop-color="#ececec"/><stop offset="0.5" stop-color="#f6f6f6"/><stop offset="0.75" stop-color="#f0f0f0"/><stop offset="1" stop-color="#ebebeb"/></linearGradient></defs>
<rect x="389" y="324" width="252" height="124" fill="url(#sb)"/>
<g filter="url(#bl)" fill="none" stroke-linecap="round">
<path d="M435 320 C437 380 445 420 472 452" stroke="#d4d4d4" stroke-width="14"/>
<path d="M487 320 C492 370 505 410 540 452" stroke="#dadada" stroke-width="12"/>
<path d="M528 320 C550 370 590 410 645 432" stroke="#dedede" stroke-width="12"/>
<path d="M585 320 C600 345 620 360 645 372" stroke="#dcdcdc" stroke-width="10"/>
<path d="M560 360 C590 410 610 430 640 450" stroke="#e0e0e0" stroke-width="10"/>
<path d="M400 320 L402 452" stroke="#dadada" stroke-width="10"/>
<path d="M505 318 C520 340 560 350 600 340" stroke="#f8f8f8" stroke-width="22"/>
</g>
<g filter="url(#bl2)" fill="none" stroke-linecap="round" stroke="#fff">
<path d="M458 320 C460 380 466 415 490 450" stroke-width="7"/>
<path d="M505 320 C508 370 525 405 564 452" stroke-width="6.500"/>
<path d="M538 355 C565 385 600 420 645 445" stroke-width="6"/>
<path d="M598 330 C608 355 622 372 645 390" stroke-width="5.500"/>
<path d="M610 324 C620 340 630 350 645 360" stroke-width="3"/>
<path d="M416 322 L418 450" stroke-width="5" stroke="#f2f2f2"/>
</g>
</svg><svg class="abs" style="left:15px;top:0px" width="256" height="15" viewBox="387 307 256 15"><rect x="387" y="307" width="256" height="15" fill="#fff"/><rect x="387" y="306" width="1" height="15" fill="#000"/><rect x="392" y="318" width="1" height="3" fill="#000"/><rect x="397" y="316" width="1" height="5" fill="#000"/><rect x="402" y="318" width="1" height="3" fill="#000"/><rect x="407" y="316" width="1" height="5" fill="#000"/><rect x="412" y="318" width="1" height="3" fill="#000"/><rect x="417" y="316" width="1" height="5" fill="#000"/><rect x="422" y="318" width="1" height="3" fill="#000"/><rect x="427" y="316" width="1" height="5" fill="#000"/><rect x="432" y="318" width="1" height="3" fill="#000"/><rect x="437" y="306" width="1" height="15" fill="#000"/><rect x="442" y="318" width="1" height="3" fill="#000"/><rect x="447" y="316" width="1" height="5" fill="#000"/><rect x="452" y="318" width="1" height="3" fill="#000"/><rect x="457" y="316" width="1" height="5" fill="#000"/><rect x="462" y="318" width="1" height="3" fill="#000"/><rect x="467" y="316" width="1" height="5" fill="#000"/><rect x="472" y="318" width="1" height="3" fill="#000"/><rect x="477" y="316" width="1" height="5" fill="#000"/><rect x="482" y="318" width="1" height="3" fill="#000"/><rect x="487" y="306" width="1" height="15" fill="#000"/><rect x="492" y="318" width="1" height="3" fill="#000"/><rect x="497" y="316" width="1" height="5" fill="#000"/><rect x="502" y="318" width="1" height="3" fill="#000"/><rect x="507" y="316" width="1" height="5" fill="#000"/><rect x="512" y="318" width="1" height="3" fill="#000"/><rect x="517" y="316" width="1" height="5" fill="#000"/><rect x="522" y="318" width="1" height="3" fill="#000"/><rect x="527" y="316" width="1" height="5" fill="#000"/><rect x="532" y="318" width="1" height="3" fill="#000"/><rect x="537" y="306" width="1" height="15" fill="#000"/><rect x="542" y="318" width="1" height="3" fill="#000"/><rect x="547" y="316" width="1" height="5" fill="#000"/><rect x="552" y="318" width="1" height="3" fill="#000"/><rect x="557" y="316" width="1" height="5" fill="#000"/><rect x="562" y="318" width="1" height="3" fill="#000"/><rect x="567" y="316" width="1" height="5" fill="#000"/><rect x="572" y="318" width="1" height="3" fill="#000"/><rect x="577" y="316" width="1" height="5" fill="#000"/><rect x="582" y="318" width="1" height="3" fill="#000"/><rect x="587" y="306" width="1" height="15" fill="#000"/><rect x="592" y="318" width="1" height="3" fill="#000"/><rect x="597" y="316" width="1" height="5" fill="#000"/><rect x="602" y="318" width="1" height="3" fill="#000"/><rect x="607" y="316" width="1" height="5" fill="#000"/><rect x="612" y="318" width="1" height="3" fill="#000"/><rect x="617" y="316" width="1" height="5" fill="#000"/><rect x="622" y="318" width="1" height="3" fill="#000"/><rect x="627" y="316" width="1" height="5" fill="#000"/><rect x="632" y="318" width="1" height="3" fill="#000"/><rect x="637" y="306" width="1" height="15" fill="#000"/><rect x="642" y="318" width="1" height="3" fill="#000"/><rect x="387" y="321" width="256" height="1" fill="#000"/><text x="389" y="315" font-size="9" font-family="Liberation Sans" letter-spacing="-0.300" stroke="#000" stroke-width="0.250">0</text><text x="439" y="315" font-size="9" font-family="Liberation Sans" letter-spacing="-0.300" stroke="#000" stroke-width="0.250">50</text><text x="489" y="315" font-size="9" font-family="Liberation Sans" letter-spacing="-0.300" stroke="#000" stroke-width="0.250">100</text><text x="539" y="315" font-size="9" font-family="Liberation Sans" letter-spacing="-0.300" stroke="#000" stroke-width="0.250">150</text><text x="589" y="315" font-size="9" font-family="Liberation Sans" letter-spacing="-0.300" stroke="#000" stroke-width="0.250">200</text><text x="639" y="315" font-size="9" font-family="Liberation Sans" letter-spacing="-0.300" stroke="#000" stroke-width="0.250">2</text></svg><svg class="abs" style="left:0px;top:15px" width="15" height="128" viewBox="372 322 15 128"><rect x="372" y="322" width="15" height="128" fill="#fff"/><rect x="371" y="322" width="15" height="1" fill="#000"/><rect x="383" y="327" width="3" height="1" fill="#000"/><rect x="381" y="332" width="5" height="1" fill="#000"/><rect x="383" y="337" width="3" height="1" fill="#000"/><rect x="381" y="342" width="5" height="1" fill="#000"/><rect x="383" y="347" width="3" height="1" fill="#000"/><rect x="381" y="352" width="5" height="1" fill="#000"/><rect x="383" y="357" width="3" height="1" fill="#000"/><rect x="381" y="362" width="5" height="1" fill="#000"/><rect x="383" y="367" width="3" height="1" fill="#000"/><rect x="371" y="372" width="15" height="1" fill="#000"/><rect x="383" y="377" width="3" height="1" fill="#000"/><rect x="381" y="382" width="5" height="1" fill="#000"/><rect x="383" y="387" width="3" height="1" fill="#000"/><rect x="381" y="392" width="5" height="1" fill="#000"/><rect x="383" y="397" width="3" height="1" fill="#000"/><rect x="381" y="402" width="5" height="1" fill="#000"/><rect x="383" y="407" width="3" height="1" fill="#000"/><rect x="381" y="412" width="5" height="1" fill="#000"/><rect x="383" y="417" width="3" height="1" fill="#000"/><rect x="371" y="422" width="15" height="1" fill="#000"/><rect x="383" y="427" width="3" height="1" fill="#000"/><rect x="381" y="432" width="5" height="1" fill="#000"/><rect x="383" y="437" width="3" height="1" fill="#000"/><rect x="381" y="442" width="5" height="1" fill="#000"/><rect x="383" y="447" width="3" height="1" fill="#000"/><rect x="386" y="322" width="1" height="128" fill="#000"/><text x="373" y="330" font-size="9" font-family="Liberation Sans" stroke="#000" stroke-width="0.250">0</text><text x="373" y="379" font-size="9" font-family="Liberation Sans" stroke="#000" stroke-width="0.250">5</text><text x="373" y="388" font-size="9" font-family="Liberation Sans" stroke="#000" stroke-width="0.250">0</text><text x="373" y="430" font-size="9" font-family="Liberation Sans" stroke="#000" stroke-width="0.250">1</text><text x="373" y="438" font-size="9" font-family="Liberation Sans" stroke="#000" stroke-width="0.250">0</text><text x="373" y="446" font-size="9" font-family="Liberation Sans" stroke="#000" stroke-width="0.250">0</text></svg><svg class="abs" style="left:0;top:0" width="15" height="15"><rect width="15" height="15" fill="#fff"/><path d="M10.500 1 L10.500 15 M1 10.500 L15 10.500" stroke="#000" stroke-width="1" stroke-dasharray="1 1"/><rect x="14" y="0" width="1" height="15" fill="#000"/><rect x="0" y="14" width="15" height="1" fill="#000"/></svg><div class="sbv" style="left:271px;top:0;height:143px"></div><div class="sbtn" style="left:271px;top:0"><svg width="13" height="13"><path d="M3 8 L6.500 4.500 L10 8" stroke="#c8c6bc" stroke-width="2" fill="none"/></svg></div><div class="sbtn" style="left:271px;top:128px"><svg width="13" height="13"><path d="M3 5 L6.500 8.500 L10 5" stroke="#c8c6bc" stroke-width="2" fill="none"/></svg></div><div class="sbb" style="left:0;top:143px;width:286px"></div><div class="zb" style="left:0;top:143px;width:48px;height:15px">100%</div><div class="abs" style="left:48px;top:143px;width:22px;height:15px;background:#ece9d8"><svg width="22" height="15"><circle cx="11" cy="7.500" r="5" fill="#e8e6da" stroke="#444" stroke-width="1"/><path d="M9 5.500 L12 5.500 L13.500 7 L13.500 10 L9 10 Z" fill="#fff" stroke="#222" stroke-width="0.900"/></svg></div><div class="sbtn" style="left:71px;top:143px"><svg width="13" height="13"><path d="M8 3 L4.500 6.500 L8 10" stroke="#c8c6bc" stroke-width="2" fill="none"/></svg></div><div class="sbtn" style="left:255px;top:143px"><svg width="13" height="13"><path d="M5 3 L8.500 6.500 L5 10" stroke="#c8c6bc" stroke-width="2" fill="none"/></svg></div><div class="abs" style="left:271px;top:143px;width:15px;height:15px;background:#ece9d8"><svg width="15" height="15"><g fill="#b4b0a0"><rect x="11" y="12" width="2" height="2"/><rect x="7" y="12" width="2" height="2"/><rect x="11" y="8" width="2" height="2"/></g><g fill="#fff"><rect x="12" y="13" width="1" height="1"/><rect x="8" y="13" width="1" height="1"/><rect x="12" y="9" width="1" height="1"/></g></svg></div></div></div>
<div class="pal" style="left:617px;top:82px;width:212px;height:60px"><div class="ptb" style="height:17px"></div><div class="pb" style="left:180px;top:2px"><svg width="11" height="11"><rect x="2.500" y="3" width="6" height="5.500" fill="none" stroke="#fff" stroke-width="1"/><rect x="2" y="2" width="7" height="2" fill="#fff"/></svg></div><div class="pb close" style="left:196px;top:2px"><svg width="11" height="11"><path d="M2.500 2.500 L8.500 8.500 M8.500 2.500 L2.500 8.500" stroke="#fff" stroke-width="1.800"/></svg></div><div class="pc" style="left:3px;top:17px;width:206px;height:40px"><div class="tabs" style="width:206px;height:15px"><svg class="abs" style="left:0;top:0" width="206" height="15"><path d="M119 1 L125 1 C130 2 130 12 138 12 L138 15 L119 15 Z" fill="#bdbdbd"/><path d="M120 1.500 C126 2 127 11 133 11.500" fill="none" stroke="#808080" stroke-width="1.600"/><path d="M133 12 L154 12" fill="none" stroke="#a4a4a4" stroke-width="1"/><path d="M153 1 L159 1 C164 2 164 12 172 12 L172 15 L153 15 Z" fill="#bdbdbd"/><path d="M154 1.500 C160 2 161 11 167 11.500" fill="none" stroke="#808080" stroke-width="1.600"/><path d="M167 12 L188 12" fill="none" stroke="#a4a4a4" stroke-width="1"/><path d="M6 15 L6 4 Q6 1 9 1 L58 1 C66 1 66 15 77 15 Z" fill="#ece9d8"/><path d="M58 0.500 C67 0.500 67 14.500 77 14.500" fill="none" stroke="#8c8c8c" stroke-width="1"/><path d="M6.500 14 L6.500 4 Q6.500 1.500 9 1.500 L58 1.500" fill="none" stroke="#fbfaf4" stroke-width="1"/><path d="M174 15 C183 15 181 2 191 2 L206 2 L206 15 Z" fill="#ece9d8"/></svg><div class="tab" style="left:11px;color:#000;top:-1px">Farbregler</div><div class="tab" style="left:74px;color:#3c3c3c;top:-1px">Farbfelder</div><div class="tab" style="left:134px;color:#3c3c3c;top:-1px">Stile</div></div><svg class="abs" style="left:193px;top:4px" width="12" height="12"><circle cx="6" cy="6" r="5" fill="#f4f2ea" stroke="#666" stroke-width="1"/><path d="M4.500 3.200 L8 6 L4.500 8.800 Z" fill="#111"/></svg><div class="abs" style="left:3px;top:22px;width:200px;height:17px;background:#fff;border:1px solid #d8d4c4"></div><div class="abs" style="left:4px;top:23px;width:190px;height:15px;background:linear-gradient(rgba(255,255,255,0.9) 0,rgba(255,255,255,0.5) 20%,rgba(255,255,255,0) 50%,rgba(0,0,0,0) 58%,rgba(0,0,0,0.38) 80%,rgba(0,0,0,0.85) 100%),linear-gradient(90deg,#f0101c 0,#f8a010 9%,#fff000 17%,#60b020 25%,#009040 31%,#009a70 40%,#00a4e4 50%,#0060b0 58%,#1a2a7c 67%,#801080 76%,#e4007c 86%,#f00030 95%,#e80018 100%)"></div><div class="abs" style="left:194px;top:23px;width:8px;height:7px;background:#fff"></div><div class="abs" style="left:194px;top:30px;width:8px;height:8px;background:#000"></div></div></div><div class="pal" style="left:785px;top:176px;width:212px;height:225px"><div class="ptb" style="height:17px"></div><div class="pb" style="left:180px;top:2px"><svg width="11" height="11"><rect x="2" y="7" width="5" height="2" fill="#fff"/></svg></div><div class="pb close" style="left:196px;top:2px"><svg width="11" height="11"><path d="M2.500 2.500 L8.500 8.500 M8.500 2.500 L2.500 8.500" stroke="#fff" stroke-width="1.800"/></svg></div><div class="pc" style="left:3px;top:17px;width:206px;height:205px"><div class="tabs" style="width:205px;height:15px"><svg class="abs" style="left:0;top:0" width="205" height="15"><path d="M93 1 L99 1 C104 2 104 12 112 12 L112 15 L93 15 Z" fill="#bdbdbd"/><path d="M94 1.500 C100 2 101 11 107 11.500" fill="none" stroke="#808080" stroke-width="1.600"/><path d="M107 12 L128 12" fill="none" stroke="#a4a4a4" stroke-width="1"/><path d="M6 15 L6 4 Q6 1 9 1 L44 1 C52 1 52 15 63 15 Z" fill="#ece9d8"/><path d="M44 0.500 C53 0.500 53 14.500 63 14.500" fill="none" stroke="#8c8c8c" stroke-width="1"/><path d="M6.500 14 L6.500 4 Q6.500 1.500 9 1.500 L44 1.500" fill="none" stroke="#fbfaf4" stroke-width="1"/><path d="M174 15 C183 15 181 2 191 2 L205 2 L205 15 Z" fill="#ece9d8"/></svg><div class="tab" style="left:11px;color:#000;top:-1px">Zeichen</div><div class="tab" style="left:62px;color:#3c3c3c;top:-1px">Absatz</div></div><svg class="abs" style="left:193px;top:4px" width="12" height="12"><circle cx="6" cy="6" r="5" fill="#f4f2ea" stroke="#666" stroke-width="1"/><path d="M4.500 3.200 L8 6 L4.500 8.800 Z" fill="#111"/></svg><div class="combo" style="left:5px;top:20px;width:117px;height:20px">Arial<b><svg width="10" height="8"><path d="M1 1.500 L4.500 5 L8 1.500" stroke="#4d6185" stroke-width="2" fill="none"/></svg></b></div><div class="combo" style="left:127px;top:20px;width:74px;height:20px">Regular<b><svg width="10" height="8"><path d="M1 1.500 L4.500 5 L8 1.500" stroke="#4d6185" stroke-width="2" fill="none"/></svg></b></div><div class="psep" style="left:4px;top:43px;width:197px"></div><div class="combo" style="left:29px;top:49px;width:74px;height:20px">18 Pt<b><svg width="10" height="8"><path d="M1 1.500 L4.500 5 L8 1.500" stroke="#4d6185" stroke-width="2" fill="none"/></svg></b></div><div class="combo" style="left:131px;top:49px;width:74px;height:20px">74 Pt<b><svg width="10" height="8"><path d="M1 1.500 L4.500 5 L8 1.500" stroke="#4d6185" stroke-width="2" fill="none"/></svg></b></div><div class="combo dis" style="left:29px;top:72px;width:74px;height:20px">Metrisch<b><svg width="10" height="8"><path d="M1 1.500 L4.500 5 L8 1.500" stroke="#4d6185" stroke-width="2" fill="none"/></svg></b></div><div class="combo" style="left:131px;top:72px;width:74px;height:20px">-40<b><svg width="10" height="8"><path d="M1 1.500 L4.500 5 L8 1.500" stroke="#4d6185" stroke-width="2" fill="none"/></svg></b></div><div class="psep" style="left:4px;top:95px;width:197px"></div><div class="inp" style="left:29px;top:100px;width:56px">100%</div><div class="inp" style="left:131px;top:100px;width:56px">100%</div><div class="inp" style="left:29px;top:121px;width:56px">0 Pt</div><div class="abs" style="left:99px;top:124px;font-size:10px;letter-spacing:0">Farbe:</div><div class="abs" style="left:132px;top:122px;width:54px;height:16px;background:#058017;border:1px solid #7a8a6a"></div><div class="psep" style="left:4px;top:142px;width:197px"></div><svg class="abs" style="left:0;top:47px" width="205" height="150" viewBox="788 240 205 150" font-family="Liberation Serif" fill="#111"><text x="795" y="258.500" font-size="12" font-weight="bold" fill="#888">T</text><text x="799" y="258.500" font-size="18.500" font-weight="bold">T</text><g font-family="Liberation Sans" font-weight="bold" font-size="8.500"><text x="902.500" y="250">A</text><text x="903.500" y="258.500">A</text></g><path d="M900 251 L911 251 M900 260 L911 260" stroke="#333" stroke-width="1"/><path d="M901.500 252.500 L901.500 258.500" stroke="#111" stroke-width="1"/><path d="M899.800 254 L901.500 251.800 L903.200 254 Z M899.800 257 L901.500 259.200 L903.200 257 Z"/><g font-family="Liberation Sans" font-size="10"><text x="795" y="279">A</text><text x="802.500" y="279">V</text></g><path d="M801 268 L801 273 M797.500 270 L804.500 270 M801 276 L801 283 M798 281 L805 281" stroke="#222" stroke-width="1" fill="none"/><path d="M797 270 L799.500 268 L799.500 272 Z M806 281 L803.500 279 L803.500 283 Z"/><rect x="897" y="269" width="16" height="9" fill="#a8a8a0"/><g font-family="Liberation Sans" font-size="9" font-weight="bold"><text x="897.500" y="277">A</text><text x="905.500" y="277">V</text></g><path d="M899 281 L911 281" stroke="#111" stroke-width="1"/><path d="M897.500 281 L900.500 279 L900.500 283 Z M912.500 281 L909.500 279 L909.500 283 Z"/><path d="M796 297 L796 308" stroke="#111" stroke-width="1"/><path d="M794 298.500 L796 295.500 L798 298.500 Z M794 306.500 L796 309.500 L798 306.500 Z"/><text x="799" y="308.500" font-size="18.500" font-weight="bold">T</text><g transform="translate(897.500 305.800) scale(1.400 1)"><text x="0" y="0" font-size="16" font-weight="bold">T</text></g><path d="M899 309 L912 309" stroke="#111" stroke-width="1"/><path d="M897 309 L900 307 L900 311 Z M914 309 L911 307 L911 311 Z"/><g font-family="Liberation Sans" font-weight="bold"><text x="795.500" y="326" font-size="10">A</text><text x="803.500" y="322.500" font-size="9">a</text></g><path d="M795 327.500 L803 327.500 M803.500 323.500 L809.500 323.500" stroke="#555" stroke-width="1"/><path d="M806.500 326 L806.500 330.500" stroke="#111" stroke-width="1"/><path d="M804.500 327.300 L806.500 324.500 L808.500 327.300 Z"/><g font-size="14" font-weight="bold"><text x="803" y="356" font-size="14.500" stroke="#111" stroke-width="0.500">T</text><text x="824.500" y="356" font-style="italic" font-weight="normal" font-size="14.500">T</text><text x="850" y="356">TT</text><text x="873.500" y="356">T</text><text x="881.500" y="356" font-size="10">T</text><text x="896" y="356">T</text><text x="904.500" y="351" font-size="7">1</text><text x="917" y="356">T</text><text x="925.500" y="358" font-size="7">1</text><text x="948" y="355">T</text><rect x="948" y="356.500" width="9" height="1" /><text x="969" y="356">T</text><rect x="968.500" y="350.500" width="10" height="1.200"/></g><text x="905" y="383" font-size="12">a</text><text x="910.500" y="386" font-size="15">a</text></svg><div class="psep" style="left:4px;top:171px;width:197px"></div><div class="combo" style="left:4px;top:177px;width:105px;height:22px;padding-top:5px">Deutsch<b><svg width="10" height="8"><path d="M1 1.500 L4.500 5 L8 1.500" stroke="#4d6185" stroke-width="2" fill="none"/></svg></b></div><div class="combo" style="left:133px;top:177px;width:68px;height:22px;padding-top:5px">Ohne<b><svg width="10" height="8"><path d="M1 1.500 L4.500 5 L8 1.500" stroke="#4d6185" stroke-width="2" fill="none"/></svg></b></div></div></div><div class="pal" style="left:785px;top:402px;width:239px;height:332px"><div class="ptb" style="height:17px"></div><div class="pb" style="left:225px;top:2px"><svg width="11" height="11"><rect x="2" y="7" width="5" height="2" fill="#fff"/></svg></div><div class="pc" style="left:3px;top:17px;width:236px;height:315px"><div class="tabs" style="width:236px;height:15px"><svg class="abs" style="left:0;top:0" width="236" height="15"><path d="M93 1 L99 1 C104 2 104 12 112 12 L112 15 L93 15 Z" fill="#bdbdbd"/><path d="M94 1.500 C100 2 101 11 107 11.500" fill="none" stroke="#808080" stroke-width="1.600"/><path d="M107 12 L128 12" fill="none" stroke="#a4a4a4" stroke-width="1"/><path d="M6 15 L6 4 Q6 1 9 1 L44 1 C52 1 52 15 63 15 Z" fill="#ece9d8"/><path d="M44 0.500 C53 0.500 53 14.500 63 14.500" fill="none" stroke="#8c8c8c" stroke-width="1"/><path d="M6.500 14 L6.500 4 Q6.500 1.500 9 1.500 L44 1.500" fill="none" stroke="#fbfaf4" stroke-width="1"/><path d="M218 15 C227 15 225 2 235 2 L236 2 L236 15 Z" fill="#ece9d8"/></svg><div class="tab" style="left:11px;color:#000;top:-1px">Ebenen</div><div class="tab" style="left:62px;color:#3c3c3c;top:-1px">Kanäle</div></div><div class="combo dis dis2" style="left:3px;top:20px;width:151px;height:17px;padding-top:2px;padding-left:3px">Normal<b><svg width="10" height="8"><path d="M1 1.500 L4.500 5 L8 1.500" stroke="#c8c6bc" stroke-width="2" fill="none"/></svg></b></div><div class="abs" style="left:155px;top:22px;font-size:10px;color:#aca899;letter-spacing:0">Deckkr.:</div><div class="inp" style="left:197px;top:20px;width:50px;height:17px;padding-top:2px;color:#aca899;border-color:#d0cec2;background:#f0eee2">100%</div><div class="psep" style="left:0;top:39px;width:242px"></div><div class="abs" style="left:37px;top:47px;font-size:10px;color:#aca899;letter-spacing:0">Fixieren:</div><svg class="abs" style="left:80px;top:45px" width="70" height="16" viewBox="868 464 70 16"><rect x="870.500" y="466.500" width="10" height="10" fill="#f4f4f0" stroke="#888" stroke-width="1"/><rect x="871" y="467" width="4.500" height="4.500" fill="#c8c8c4"/><rect x="875.500" y="471.500" width="4.500" height="4.500" fill="#c8c8c4"/><path d="M887 477 C888 474 890 472.500 893 471.500 L899 466 L900 467 L894.500 473 C893 476 890 477 887 477 Z" fill="#999" stroke="#777" stroke-width="0.800"/><path d="M909.500 466.500 L909.500 477.500 M904 472 L915 472" stroke="#666" stroke-width="1.200"/><path d="M907.500 468.500 L909.500 466 L911.500 468.500 Z M907.500 475.500 L909.500 478 L911.500 475.500 Z M906.500 470 L904 472 L906.500 474 Z M912.500 470 L915 472 L912.500 474 Z" fill="#666"/><rect x="922.500" y="471" width="8.500" height="6" fill="#8c8c88" stroke="#666" stroke-width="0.800"/><path d="M924.500 471 L924.500 469.500 C924.500 467 929 467 929 469.500 L929 471" fill="none" stroke="#777" stroke-width="1.300"/></svg><div class="abs" style="left:161px;top:47px;font-size:10px;color:#aca899;letter-spacing:0">Fläche:</div><div class="inp" style="left:197px;top:45px;width:50px;height:17px;padding-top:2px;color:#aca899;border-color:#d0cec2;background:#f0eee2">100%</div><div class="abs" style="left:0;top:64px;width:242px;height:1px;background:#aca899"></div><div class="abs" style="left:23px;top:65px;width:220px;height:40px;background:#316ac5"></div><div class="abs" style="left:0;top:105px;width:242px;height:1px;background:#d8d4c4"></div><div class="abs" style="left:54px;top:80px;font-size:10px;color:#fff;font-style:italic;letter-spacing:0.3px;-webkit-text-stroke:0">Hintergrund</div><svg class="abs" style="left:3px;top:76px" width="16" height="16"><rect x="0" y="0" width="16" height="16" fill="#f4f2e8"/><rect x="0" y="0" width="16" height="1" fill="#c8c4b4"/><rect x="0" y="0" width="1" height="16" fill="#c8c4b4"/><path d="M2 8.500 C4.500 4.500 11 4.500 14 8.500 C11 12 4.500 12 2 8.500 Z" fill="#fff" stroke="#111" stroke-width="1.200"/><circle cx="8" cy="8.300" r="2.600" fill="#111"/><path d="M2 6.500 C5 3 11 3 14 6.500" fill="none" stroke="#111" stroke-width="1.300"/></svg><svg class="abs" style="left:25px;top:69px" width="24" height="32" viewBox="0 0 24 32"><rect x="0.500" y="0.500" width="23" height="31" fill="#fff" stroke="#000" stroke-width="1"/><path d="M6.500 8 C7 4.500 17 4.500 17.500 8 L16.500 10.500 L7.500 10.500 Z" fill="#d8403a"/><path d="M7.500 9.500 L16.500 9.500 L16 11.500 L8 11.500 Z" fill="#8a7a30"/><path d="M12 2.500 L12 5" stroke="#8a7a30" stroke-width="1"/><circle cx="12" cy="19.500" r="9.500" fill="#f0ece0" stroke="#9a8a34" stroke-width="1"/><circle cx="12" cy="19.500" r="6.500" fill="#2a2a34" stroke="#9a8a34" stroke-width="0.800"/><path d="M7.500 15 L14 13.500 L18 17 L17.500 20 L9 22.500 Z" fill="#3e8c3c"/><circle cx="12" cy="23.500" r="2.200" fill="#e47c34"/><path d="M6.500 15 L8.500 24" stroke="#8c3a22" stroke-width="0.800"/></svg><svg class="abs" style="left:210px;top:79px" width="12" height="12" viewBox="0 0 12 12"><rect x="1" y="5" width="9.500" height="6" fill="#fff" stroke="#222" stroke-width="1"/><path d="M3 5 L3 3.500 C3 0.800 8.500 0.800 8.500 3.500 L8.500 5" fill="none" stroke="#f0f0f0" stroke-width="1.500"/><rect x="4" y="7" width="3.500" height="2.500" fill="#222"/></svg></div></div>
<div id="taskbar">
<div class="abs" style="left:0;top:0;width:1024px;height:4px;background:linear-gradient(#1e50c0 0,#3c86f8 1px,#3a80f4 2px,#2a6ce8 4px)"></div>
<!-- start button -->
<div class="abs" style="left:0;top:4px;width:98px;height:30px;border-radius:0 12px 12px 0;background:linear-gradient(#2f8a2f 0,#5cba5c 2px,#48a848 5px,#3a9a3a 10px,#379637 20px,#2f8a30 26px,#2a7a2a 30px);box-shadow:1px 0 2px #1a3a9a, inset -3px 0 4px rgba(20,80,20,.5)"></div>
<svg class="abs" style="left:9px;top:9px" width="22" height="20" viewBox="0 0 22 20">
<path d="M2.500 2.500 C5 1 7.500 1 10 2.500 L8.800 8.500 C6.500 7.200 4 7.200 1.500 8.500 Z" fill="#f0502c"/>
<path d="M11.500 3 C14 4.500 16.500 4.500 19.500 3 L18.200 9 C15.500 10.500 13 10.500 10.200 9 Z" fill="#7cc43c"/>
<path d="M1.200 10 C3.500 8.700 6 8.700 8.500 10 L7.200 16.200 C5 15 2.500 15 0 16.200 Z" fill="#4a8cf0"/>
<path d="M9.900 10.500 C12.500 12 15 12 17.900 10.500 L16.600 16.700 C14 18.200 11.500 18.200 8.600 16.700 Z" fill="#f8c020"/>
</svg>
<div class="abs" style="left:35px;top:9px;font-size:17px;font-weight:bold;font-style:italic;color:#fff;text-shadow:1px 1px 2px #1a4a1a;letter-spacing:-0.2px">Start</div>
<!-- grips -->
<div class="grip" style="left:108px"></div><div class="grip" style="left:210px"></div>
<!-- quick launch -->
<svg class="abs" style="left:120px;top:11px" width="17" height="15" viewBox="0 0 17 15"><rect x="1" y="1" width="13" height="13" rx="2" fill="#fff" stroke="#b8d0f0" stroke-width="1"/><circle cx="7.500" cy="7.500" r="3.600" fill="none" stroke="#2a6ad0" stroke-width="1.800"/><rect x="5" y="6.800" width="6" height="1.400" fill="#2a6ad0"/><rect x="9" y="8.200" width="3" height="2" fill="#fff"/><path d="M11 4 L15.500 5.500 L11.500 7" fill="#f08020"/></svg>
<svg class="abs" style="left:145px;top:14px" width="16" height="10" viewBox="0 0 16 10"><path d="M1 9 L1 3 L3 1 L4.500 4 L6 1 L8 4.500 L10 1 L11.500 4 L13 1 L15 3 L15 9 L12 9 L12 6 L10 9 L8 6 L6 9 L4 6 L4 9 Z" fill="#f4d000" stroke="#a07800" stroke-width="0.800"/></svg>
<svg class="abs" style="left:167px;top:10px" width="17" height="17" viewBox="0 0 17 17"><circle cx="8.500" cy="8.500" r="7.500" fill="#e8701c"/><circle cx="9" cy="8" r="4.800" fill="#3a6ad0"/><path d="M1.500 6 C3 2 7 0.500 10 1.500 C7 2.500 5 4 5.500 7 C6 10 9 11 12 9.500 C13.500 8.500 14 6 13 4 C16 6 16.500 11 13.500 14 C10 17 4 16 2 12 C1 10 1 8 1.500 6 Z" fill="#f08a1c"/><path d="M2 5 C4 3.500 6 4 7 5.500 C5.500 6 5 7 5.500 8.500 C3.500 8 2.500 6.500 2 5 Z" fill="#f8c840"/></svg>
<svg class="abs" style="left:195px;top:12px" width="9" height="6"><path d="M1 0.500 L3.500 3 L1 5.500 M5 0.500 L7.500 3 L5 5.500" stroke="#b8d0ff" stroke-width="1.300" fill="none"/></svg>
<!-- task buttons -->
<div class="tbtn" style="left:221px;width:150px"><svg class="abs" style="left:9px;top:3px" width="17" height="17" viewBox="0 0 17 17"><circle cx="8.500" cy="8.500" r="7.500" fill="#e8701c"/><circle cx="9" cy="8" r="4.800" fill="#3a6ad0"/><path d="M1.500 6 C3 2 7 0.500 10 1.500 C7 2.500 5 4 5.500 7 C6 10 9 11 12 9.500 C13.500 8.500 14 6 13 4 C16 6 16.500 11 13.500 14 C10 17 4 16 2 12 C1 10 1 8 1.500 6 Z" fill="#f08a1c"/><path d="M2 5 C4 3.500 6 4 7 5.500 C5.500 6 5 7 5.500 8.500 C3.500 8 2.500 6.500 2 5 Z" fill="#f8c840"/></svg><span style="left:29px">VDFB.DE | Hilfe-For…</span></div>
<div class="tbtn act" style="left:373px;width:151px"><svg class="abs" style="left:10px;top:4px" width="16" height="16" viewBox="0 0 16 16"><rect x="1.500" y="1.500" width="13" height="13" rx="2" fill="#fff" stroke="#c8d8f0" stroke-width="0.800"/><path d="M3 3.500 C7 4 11 8 13 13 C8.500 12.500 4.500 9 3 3.500 Z" fill="#1a8a58"/><path d="M3.500 4 C7 6 10 9 12.500 12.500" stroke="#0a3a80" stroke-width="1" fill="none"/><path d="M2.500 3 L7 2.500 L7.500 4.500 L3 5 Z" fill="#3a9ad8"/></svg><span style="left:30px">Adobe Photoshop</span></div>
<div class="tbtn" style="left:525px;width:150px"><svg class="abs" style="left:9px;top:4px" width="17" height="15" viewBox="0 0 17 15"><path d="M1 3 C1 2 1.500 1.500 2.500 1.500 L6 1.500 L7.500 3.500 L14 3.500 C15 3.500 15.500 4 15.500 5 L15.500 12.500 C15.500 13.500 15 14 14 14 L2.500 14 C1.500 14 1 13.500 1 12.500 Z" fill="#f4cc50" stroke="#a07818" stroke-width="0.900"/><path d="M2 6 L14.500 6 L14.500 12.500 L2 12.500 Z" fill="#fce890"/></svg><span style="left:29px">flags</span></div>
<div class="tbtn" style="left:677px;width:151px"><svg class="abs" style="left:9px;top:3px" width="16" height="17" viewBox="0 0 16 17"><path d="M2 7 C2 3 6 1 10 2 C14 3 14.500 7 12 8.500 C10 9.500 10.500 11 8 11.500 C4.500 12 2 10 2 7 Z" fill="#d89050" stroke="#704020" stroke-width="0.800"/><circle cx="5.500" cy="5" r="1.200" fill="#e02020"/><circle cx="9" cy="4" r="1.200" fill="#2060e0"/><circle cx="4.500" cy="8" r="1.200" fill="#20a020"/><circle cx="11.500" cy="6" r="1.100" fill="#f0e020"/><path d="M7 8 L13.500 15.500" stroke="#c0c0c8" stroke-width="1.800"/><path d="M12 13.500 L14.500 16.500" stroke="#2a2a6a" stroke-width="1.800"/></svg><span style="left:29px">Jasc Paint Shop Pro</span></div>
<!-- tray -->
<div class="abs" style="left:842px;top:4px;width:182px;height:30px;background:linear-gradient(#0c5cc8 0,#1a9cf4 2px,#18a0f4 5px,#1290ec 10px,#0f8ae8 22px,#1080dc 27px,#0c6cc8 30px);border-left:1px solid #0a3c9a;box-shadow:inset 1px 0 0 #3ab0ff"></div>
<svg class="abs" style="left:850px;top:9px" width="130" height="20" viewBox="850 743 130 20">
<!-- 1 monitor -->
<rect x="851.500" y="749" width="16" height="9.500" fill="#fff" stroke="#d01010" stroke-width="1.600"/><path d="M856 751 L863 757 M863 751 L856 757" stroke="#111" stroke-width="1"/><circle cx="859.500" cy="746" r="1.800" fill="#d01010"/><rect x="856" y="759.500" width="7" height="2" fill="#222"/><rect x="858.500" y="758.500" width="2" height="2" fill="#c00"/>
<!-- 2 network -->
<rect x="876" y="745" width="9" height="7.500" fill="#4a5a9a" stroke="#223" stroke-width="0.800"/><rect x="871.500" y="750" width="9" height="7.500" fill="#7a8ac0" stroke="#223" stroke-width="0.800"/><rect x="873" y="751.500" width="6" height="4" fill="#2a3a8a"/><rect x="871" y="758" width="10" height="1.600" fill="#999"/><path d="M878 755 L885.500 761.500 M885.500 755 L878 761.500" stroke="#e01818" stroke-width="2"/>
<!-- 3 red shield -->
<path d="M890 747.500 C892 747.500 894 746.500 895.500 745.500 C897 746.500 899 747.500 901 747.500 C901 753 899.500 758 895.500 760.500 C891.500 758 890 753 890 747.500 Z" fill="#d82828" stroke="#f0a0a0" stroke-width="0.800"/><path d="M893 750.500 L898 755.500 M898 750.500 L893 755.500" stroke="#fff" stroke-width="1.600"/>
<!-- 4 shield blue -->
<path d="M908 746.500 L920.500 746.500 C920.500 753 919 759 914 761.500 C909.500 759 908 753 908 746.500 Z" fill="#fff" stroke="#111" stroke-width="1"/><path d="M909 747.500 L914 747.500 L914 753.500 L909.200 753.500 Z" fill="#2030c0"/><path d="M914.500 754 L919.500 754 C919 757 917 759.500 914.500 760.500 Z" fill="#2030c0"/><path d="M914.500 747.500 L919.800 747.500 L919.600 753.500 L914.500 753.500 Z" fill="#e8e8f8"/><rect x="906" y="745" width="5" height="3.500" fill="#f4d800" stroke="#222" stroke-width="0.600"/><rect x="907.800" y="748" width="1.500" height="12" fill="#222"/>
<!-- 5 speaker -->
<circle cx="931" cy="752" r="5.600" fill="#8a8a8a" stroke="#444" stroke-width="1"/><circle cx="931" cy="752" r="2.600" fill="#c8c8c8" stroke="#555" stroke-width="0.700"/><path d="M926.500 757.500 C929 760.500 933 761 936.500 759" stroke="#5a8ad8" stroke-width="1.400" fill="none"/>
<!-- 6 red K -->
<rect x="942" y="745" width="15.500" height="15.500" fill="#e01414"/><path d="M946 758 L949.500 748 M947.500 753 C950 749 953.500 747 955 748 M948.500 752.500 C951 753 953.500 755 955.500 759" stroke="#fff" stroke-width="1.800" fill="none"/>
<!-- 7 calendar -->
<rect x="960.500" y="745" width="14.500" height="16" fill="#111"/><rect x="963.500" y="746.500" width="10.500" height="13" fill="#fff"/><text x="964" y="758.500" font-family="Liberation Sans" font-weight="bold" font-size="8.500" fill="#e01010" letter-spacing="-0.500">15</text><rect x="966" y="747.500" width="1.200" height="2" fill="#111"/><rect x="970" y="747.500" width="1.200" height="2" fill="#111"/>
</svg>
<div class="abs" style="left:982px;top:13px;color:#fff;font-size:11px;letter-spacing:0">21:41</div>
</div>

</div></body></html>
